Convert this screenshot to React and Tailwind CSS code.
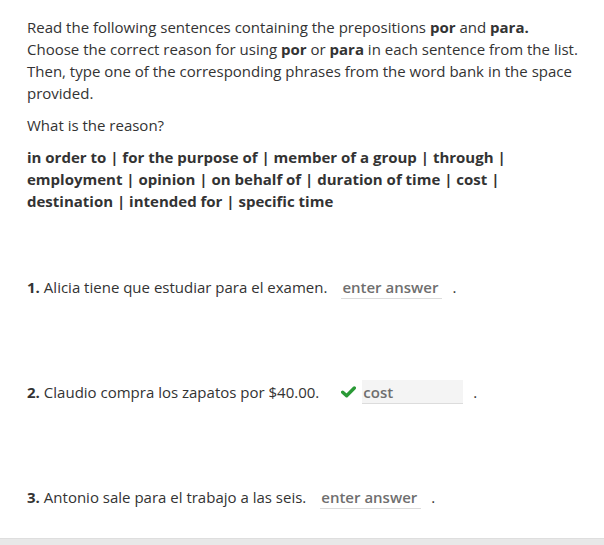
const bank = [
  "in order to",
  "for the purpose of",
  "member of a group",
  "through",
  "employment",
  "opinion",
  "on behalf of",
  "duration of time",
  "cost",
  "destination",
  "intended for",
  "specific time",
];

function AnswerBox({ value, correct }) {
  return (
    <div className="flex items-center">
      {correct && (
        <svg viewBox="0 0 16 12" className="w-[15px] h-[12px] mr-[6px]">
          <path
            d="M1.8 6.2 L6 10 L14.2 1.8"
            fill="none"
            stroke="#2a9a36"
            strokeWidth="3.6"
            strokeLinecap="round"
            strokeLinejoin="round"
          />
        </svg>
      )}
      <div
        className={`w-[101px] h-[24px] flex items-center px-[1px] border-b border-[#dcdcdc] font-semibold text-[#6f6f6f] ${
          correct ? "bg-[#f4f4f4]" : ""
        }`}
      >
        {value}
      </div>
    </div>
  );
}

function Question({ num, text, value, correct, gap, className }) {
  return (
    <div className={`flex items-center h-[22px] ${className}`}>
      <span className="font-bold">{num}.</span>
      <span className="ml-[4px]">{text}</span>
      <div className={gap}>
        <AnswerBox value={value} correct={correct} />
      </div>
      <span className="ml-[10px]">.</span>
    </div>
  );
}

export default function App() {
  return (
    <div
      className="w-[604px] h-[545px] bg-white flex flex-col text-[15px] leading-[22px] text-[#333333]"
      style={{ fontFamily: '"Open Sans", "Liberation Sans", sans-serif' }}
    >
      <div className="flex-1 pl-[27px] pr-[22px] pt-[16px]">
        <p>
          Read the following sentences containing the prepositions{" "}
          <b>por</b> and <b>para.</b> Choose the correct reason for using{" "}
          <b>por</b> or <b>para</b> in each sentence from the list. Then, type
          one of the corresponding phrases from the word bank in the space
          provided.
        </p>
        <p className="mt-[10px]">What is the reason?</p>
        <p className="mt-[10px] font-bold pr-[70px]">{bank.join(" | ")}</p>

        <Question
          className="mt-[64px]"
          num="1"
          text="Alicia tiene que estudiar para el examen."
          value="enter answer"
          gap="ml-[14px]"
        />
        <Question
          className="mt-[83px]"
          num="2"
          text="Claudio compra los zapatos por $40.00."
          value="cost"
          correct
          gap="ml-[22px]"
        />
        <Question
          className="mt-[83px]"
          num="3"
          text="Antonio sale para el trabajo a las seis."
          value="enter answer"
          gap="ml-[14px]"
        />
      </div>
      <div className="h-[7px] bg-[#e8e8e8] border-t border-[#dedede]" />
    </div>
  );
}
